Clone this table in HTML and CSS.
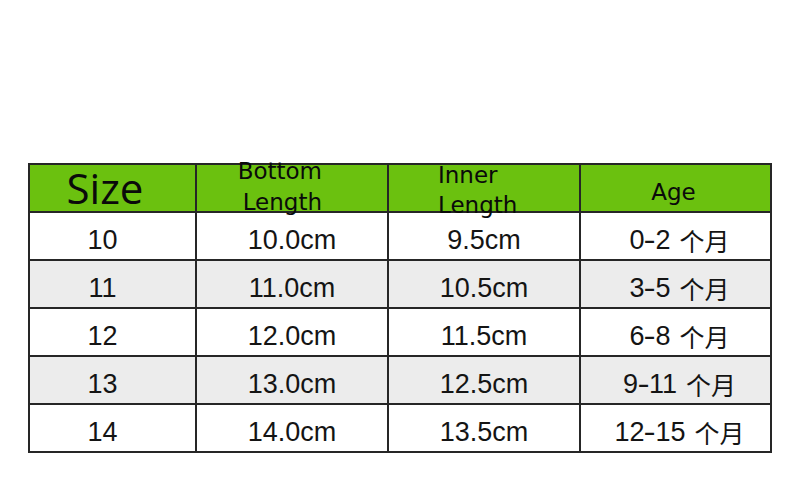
FILE: index.html
```html
<!DOCTYPE html>
<html lang="zh">
<head>
<meta charset="utf-8">
<title>Size chart</title>
<link rel="stylesheet" href="styles.css">
</head>
<body>
<div class="page">
  <div class="chart">
    <div class="cell head c1"><span class="size">Size</span></div>
    <div class="cell head c2"><div class="two right"><div>Bottom</div><div>Length</div></div></div>
    <div class="cell head c3"><div class="two left"><div>Inner</div><div>Length</div></div></div>
    <div class="cell head c4"><span class="age">Age</span></div>

    <div class="cell c1">10</div><div class="cell c2">10.0cm</div><div class="cell c3">9.5cm</div><div class="cell c4">0<span class="dash">-</span>2<span class="cjk">个月</span></div>
    <div class="cell alt c1">11</div><div class="cell alt c2">11.0cm</div><div class="cell alt c3">10.5cm</div><div class="cell alt c4">3<span class="dash">-</span>5<span class="cjk">个月</span></div>
    <div class="cell c1">12</div><div class="cell c2">12.0cm</div><div class="cell c3">11.5cm</div><div class="cell c4">6<span class="dash">-</span>8<span class="cjk">个月</span></div>
    <div class="cell alt c1">13</div><div class="cell alt c2">13.0cm</div><div class="cell alt c3">12.5cm</div><div class="cell alt c4">9<span class="dash">-</span>11<span class="cjk">个月</span></div>
    <div class="cell c1">14</div><div class="cell c2">14.0cm</div><div class="cell c3">13.5cm</div><div class="cell c4">12<span class="dash">-</span>15<span class="cjk">个月</span></div>
  </div>
</div>
</body>
</html>
```

FILE: styles.css
```css
html, body {
  margin: 0;
  padding: 0;
  background: #ffffff;
}

.page {
  width: 800px;
  height: 482px;
  padding: 163px 0 0 28px;
  box-sizing: border-box;
  overflow: hidden;
}

.chart {
  display: grid;
  grid-template-columns: 165px 190px 190px 189px;
  grid-auto-rows: 46px;
  gap: 2px;
  padding: 2px;
  width: 744px;
  box-sizing: border-box;
  background: #262626;
  font-family: "Liberation Sans", Arial, "Noto Sans CJK SC", sans-serif;
  font-size: 27px;
  color: #141414;
}

.cell {
  background: #ffffff;
  display: flex;
  align-items: center;
  justify-content: center;
  padding-top: 8px;
  line-height: 30px;
  box-sizing: border-box;
  white-space: nowrap;
}

.cell.alt {
  background: #ececec;
}

.cell.c1 {
  padding-right: 20px;
}

.cell.c4 {
  padding-left: 8px;
}

.dash {
  display: inline-block;
  transform: scaleX(1.35);
  margin: 0 1px;
}

.cjk {
  font-family: "Noto Sans CJK SC", sans-serif;
  font-size: 25px;
  margin-left: 9px;
  vertical-align: 1px;
}

.cell.head {
  background: #6bc10f;
  color: #0a0a0a;
  font-family: "DejaVu Sans", sans-serif;
  align-items: flex-start;
  padding-top: 0;
  z-index: 1;
}

.size {
  font-family: "Open Sans", "Noto Sans", sans-serif;
  font-size: 42px;
  line-height: 42px;
  margin-top: 2px;
  margin-right: -5px;
}

.two {
  font-size: 23px;
}

.two.right {
  line-height: 31px;
  margin-top: -9px;
  text-align: right;
  margin-left: auto;
  margin-right: 65px;
}

.two.left {
  line-height: 30px;
  margin-top: -5px;
  text-align: left;
  margin-right: auto;
  margin-left: 49px;
}

.age {
  font-size: 23px;
  line-height: 31px;
  margin-top: 12px;
  margin-right: 12px;
}
```
